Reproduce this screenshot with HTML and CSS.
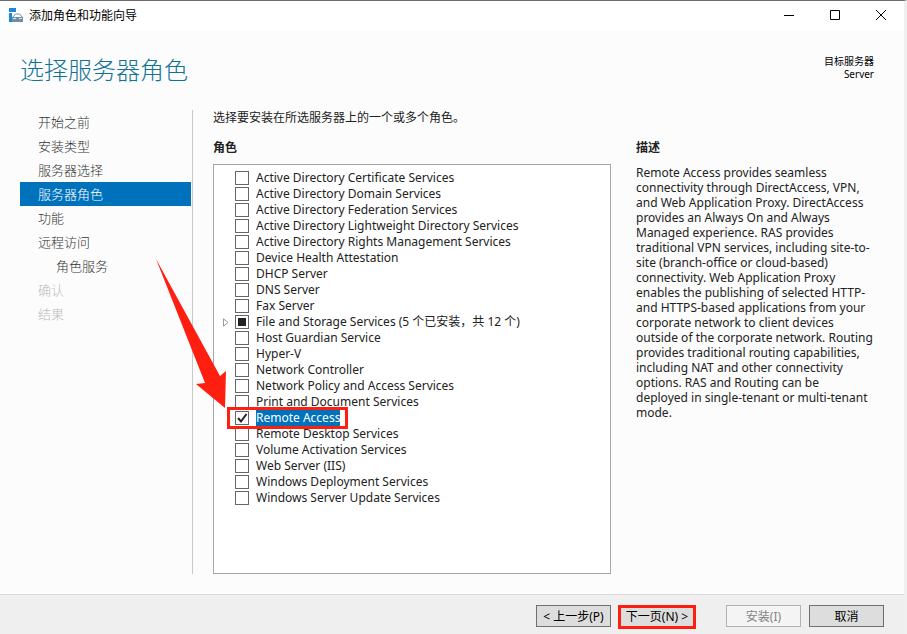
FILE: index.html
```
<!DOCTYPE html>
<html lang="zh-CN">
<head>
    <meta charset="UTF-8">
    <meta name="viewport" content="width=device-width, initial-scale=1.0">
    <title>添加角色和功能向导</title>
    <link rel="stylesheet" href="styles.css">
</head>
<body>
    <header class="titlebar">
        <svg class="app-icon" width="16" height="16" viewBox="0 0 16 16">
            <path fill="#1e88d8" d="M1 0h7v4H1zM1 5h3v9H1z"/>
            <path fill="#6f8ea9" d="M4 9h11v5H4z"/>
            <path fill="none" stroke="#6f8ea9" d="M4.500 9.500L7.500 6h4l3 3.500"/>
            <path stroke="#dfe8ef" d="M5 10.500h3M11 10.500h3"/>
        </svg>
        <span class="title">添加角色和功能向导</span>
        <button class="win-btn" aria-label="最小化">
            <svg width="12" height="12" viewBox="0 0 12 12"><path d="M1 5.500h10"/></svg>
        </button>
        <button class="win-btn" aria-label="最大化">
            <svg width="12" height="12" viewBox="0 0 12 12"><path d="M1.500 .5h9v9h-9z"/></svg>
        </button>
        <button class="win-btn" aria-label="关闭">
            <svg width="12" height="12" viewBox="0 0 12 12"><path d="M1 0l10 10M11 0L1 10"/></svg>
        </button>
    </header>

    <div class="page-head">
        <h1>选择服务器角色</h1>
        <div class="target">目标服务器<br>Server</div>
    </div>

    <div class="content">
        <nav class="steps">
            <a href="#">开始之前</a>
            <a href="#">安装类型</a>
            <a href="#">服务器选择</a>
            <a href="#" class="active">服务器角色</a>
            <a href="#">功能</a>
            <a href="#">远程访问</a>
            <a href="#" class="sub">角色服务</a>
            <a class="disabled">确认</a>
            <a class="disabled">结果</a>
        </nav>

        <main class="roles">
            <p class="intro">选择要安装在所选服务器上的一个或多个角色。</p>
            <h2>角色</h2>
            <div class="role-list">
                <label class="role"><input type="checkbox"><span>Active Directory Certificate Services</span></label>
                <label class="role"><input type="checkbox"><span>Active Directory Domain Services</span></label>
                <label class="role"><input type="checkbox"><span>Active Directory Federation Services</span></label>
                <label class="role"><input type="checkbox"><span>Active Directory Lightweight Directory Services</span></label>
                <label class="role"><input type="checkbox"><span>Active Directory Rights Management Services</span></label>
                <label class="role"><input type="checkbox"><span>Device Health Attestation</span></label>
                <label class="role"><input type="checkbox"><span>DHCP Server</span></label>
                <label class="role"><input type="checkbox"><span>DNS Server</span></label>
                <label class="role"><input type="checkbox"><span>Fax Server</span></label>
                <label class="role"><svg class="expander" width="6" height="9" viewBox="0 0 6 9"><path d="M.5 .8v7.400L5 4.500z"/></svg><input type="checkbox" class="partial"><span>File and Storage Services (5 个已安装，共 12 个)</span></label>
                <label class="role"><input type="checkbox"><span>Host Guardian Service</span></label>
                <label class="role"><input type="checkbox"><span>Hyper-V</span></label>
                <label class="role"><input type="checkbox"><span>Network Controller</span></label>
                <label class="role"><input type="checkbox"><span>Network Policy and Access Services</span></label>
                <label class="role"><input type="checkbox"><span>Print and Document Services</span></label>
                <label class="role selected"><input type="checkbox" checked><span>Remote Access</span></label>
                <label class="role"><input type="checkbox"><span>Remote Desktop Services</span></label>
                <label class="role"><input type="checkbox"><span>Volume Activation Services</span></label>
                <label class="role"><input type="checkbox"><span>Web Server (IIS)</span></label>
                <label class="role"><input type="checkbox"><span>Windows Deployment Services</span></label>
                <label class="role"><input type="checkbox"><span>Windows Server Update Services</span></label>
            </div>
        </main>

        <aside class="description">
            <h2>描述</h2>
            <p>Remote Access provides seamless connectivity through DirectAccess, VPN, and Web Application Proxy. DirectAccess provides an Always On and Always Managed experience. RAS provides traditional VPN services, including site-to-site (branch-office or cloud-based) connectivity. Web Application Proxy enables the publishing of selected HTTP- and HTTPS-based applications from your corporate network to client devices outside of the corporate network. Routing provides traditional routing capabilities, including NAT and other connectivity options. RAS and Routing can be deployed in single-tenant or multi-tenant mode.</p>
        </aside>
    </div>

    <footer class="buttons">
        <button>&lt; 上一步(P)</button>
        <button class="next">下一页(N) &gt;</button>
        <button class="install" disabled>安装(I)</button>
        <button>取消</button>
    </footer>
</body>
</html>
```
FILE: styles.css
```
* {
    box-sizing: border-box;
}
body {
    display: flex;
    flex-direction: column;
    min-height: 100vh;
    margin: 0;
    border-top: 1px solid #6b6b6b;
    border-right: 3px solid #f0f0f0;
    background-color: #fcfcfc;
    color: #222;
    font-family: "Noto Sans", "Noto Sans CJK SC", sans-serif;
    font-size: 12px;
}
h1, h2, p {
    margin: 0;
}
.titlebar {
    display: flex;
    align-items: center;
    height: 30px;
    padding-left: 8px;
    background-color: white;
    color: black;
}
.title {
    flex: 1;
    margin-left: 5px;
    line-height: 16px;
}
.win-btn {
    display: flex;
    align-items: center;
    justify-content: center;
    width: 46px;
    height: 30px;
    padding: 0;
    border: none;
    background: none;
}
.win-btn svg {
    fill: none;
    stroke: black;
}
.page-head {
    display: flex;
    justify-content: space-between;
    height: 79px;
    padding: 20px 30px 0 20px;
}
h1 {
    color: #0f7394;
    font-size: 24px;
    font-weight: 300;
    line-height: 38px;
}
.target {
    padding-top: 4px;
    color: black;
    font-size: 10px;
    line-height: 13px;
    text-align: right;
}
.content {
    display: flex;
    flex: 1;
    padding: 0 31px 20px 20px;
}
.steps {
    width: 173px;
    padding-right: 1px;
    border-right: 1px solid #c8c8c8;
}
.steps a {
    display: block;
    padding-left: 18px;
    color: #333;
    font-size: 13px;
    font-weight: 300;
    line-height: 24px;
    text-decoration: none;
}
.steps .active {
    background-color: #0072bc;
    color: white;
}
.steps .sub {
    padding-left: 36px;
}
.steps .disabled {
    color: #bbb;
}
.roles {
    display: flex;
    flex: 1;
    flex-direction: column;
    margin-left: 20px;
}
.intro {
    height: 28px;
    line-height: 16px;
}
h2 {
    font-size: 12px;
    line-height: 20px;
}
.role-list {
    flex: 1;
    margin-top: 6px;
    padding: 5px 0 5px 21px;
    border: 1px solid #a5a5a5;
    background-color: white;
}
.role {
    position: relative;
    display: flex;
    align-items: center;
    width: fit-content;
    height: 16px;
    line-height: 16px;
}
.role input {
    appearance: none;
    width: 14px;
    height: 14px;
    margin: 0 7px 0 0;
    border: 1px solid #666;
    background-color: white;
}
.role .partial {
    background: linear-gradient(#222, #222) center / 8px 8px no-repeat white;
}
.role input:checked {
    background: url("data:image/svg+xml,%3Csvg xmlns='http://www.w3.org/2000/svg' viewBox='0 0 12 12'%3E%3Cpath d='M2 6l3 3.500L10.500 2' fill='none' stroke='%23222' stroke-width='2'/%3E%3C/svg%3E") white;
}
.expander {
    position: absolute;
    left: -12px;
    fill: white;
    stroke: #999;
}
.selected span {
    background-color: #0072bc;
    color: white;
}
/* red frame around the selected role */
.selected::before {
    content: "";
    position: absolute;
    z-index: 1;
    inset: -3px -8px -3px -8px;
    border: 3px solid #ff1f10;
}
/* arrow pointing at the frame */
.selected::after {
    content: "";
    position: absolute;
    z-index: 1;
    right: 100%;
    bottom: 100%;
    width: 70px;
    height: 149px;
    margin: 0 9px 2px 0;
    background-color: #ff1f10;
    clip-path: polygon(0 0, 64px 117px, 70px 112px, 69px 149px, 40px 125px, 49px 124px);
}
.description {
    width: 237px;
    margin-left: 25px;
    padding-top: 28px;
}
.description p {
    margin-top: 7px;
    line-height: 15px;
}
.buttons {
    display: flex;
    justify-content: flex-end;
    align-items: flex-start;
    gap: 7px;
    height: 40px;
    padding: 10px 20px 0 0;
    border-top: 1px solid #dadada;
    background-color: #efefef;
}
.buttons button {
    width: 75px;
    height: 22px;
    padding: 2px 0 0;
    border: 1px solid #707070;
    background-color: #ddd;
    color: black;
    font-family: inherit;
    font-size: 12px;
    line-height: 18px;
    white-space: nowrap;
}
.buttons .next {
    width: 78px;
    height: 24px;
    padding: 0;
    border: 3px solid #ff1f10;
}
.buttons .install {
    margin: 0 1px 0 23px;
    border-color: #adb2b5;
    background-color: #f4f4f4;
    color: #838383;
}
```
